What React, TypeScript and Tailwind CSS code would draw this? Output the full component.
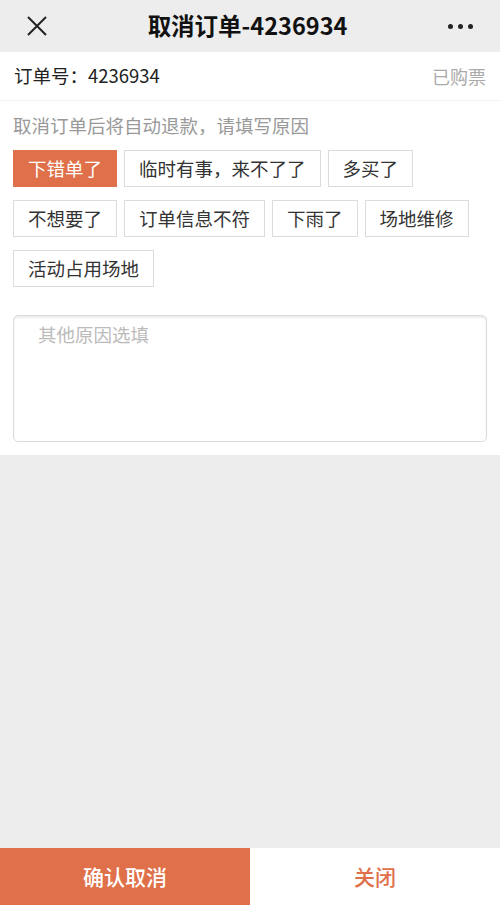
const reasons = [
  ["下错单了", "临时有事，来不了了", "多买了"],
  ["不想要了", "订单信息不符", "下雨了", "场地维修"],
  ["活动占用场地"],
];

export default function App() {
  const selected = "下错单了";
  const font = { fontFamily: '"Noto Sans CJK SC", "Noto Sans", sans-serif' };

  return (
    <div className="w-[500px] h-[905px] bg-[#ededed] flex flex-col" style={font}>
      {/* header */}
      <div className="h-[52px] flex items-center justify-between px-[27px] shrink-0">
        <svg width="20" height="20" viewBox="0 0 20 20" className="text-[#222]">
          <path d="M1 1 L19 19 M19 1 L1 19" stroke="currentColor" strokeWidth="2" />
        </svg>
        <div className="text-[23.5px] font-bold text-[#111] leading-none">取消订单-4236934</div>
        <div className="flex gap-[5px] items-center">
          <span className="w-[5px] h-[5px] rounded-full bg-[#222]" />
          <span className="w-[5px] h-[5px] rounded-full bg-[#222]" />
          <span className="w-[5px] h-[5px] rounded-full bg-[#222]" />
        </div>
      </div>

      <div className="bg-white">
        <div className="h-[49px] flex items-center justify-between px-[14px] border-b border-[#f2f2f2]">
          <span className="text-[18.5px] text-[#222]">订单号：4236934</span>
          <span className="text-[18px] text-[#aaa]">已购票</span>
        </div>

        <div className="px-[13px] pt-[12px] pb-[13px]">
          <div className="text-[18.5px] text-[#999] leading-[25px]">取消订单后将自动退款，请填写原因</div>

          <div className="mt-[12px] flex flex-col gap-[13px]">
            {reasons.map((row, i) => (
              <div key={i} className="flex gap-[7px]">
                {row.map((r) =>
                  r === selected ? (
                    <div key={r} className="h-[37px] px-[14px] flex items-center bg-[#e0704a] text-white text-[18.5px] border border-[#e0704a]">
                      {r}
                    </div>
                  ) : (
                    <div key={r} className="h-[37px] px-[14px] flex items-center bg-white text-[#333] text-[18.5px] border border-[#dcdcdc]">
                      {r}
                    </div>
                  )
                )}
              </div>
            ))}
          </div>

          <div className="mt-[28px] h-[127px] rounded-[5px] border border-[#dcdcdc] shadow-[inset_0_2px_2px_rgba(0,0,0,0.08)] px-[24px] py-[5px]">
            <div className="text-[18.5px] text-[#bbb]">其他原因选填</div>
          </div>
        </div>
      </div>

      <div className="flex-1" />

      <div className="h-[57px] flex shrink-0">
        <div className="w-[250px] bg-[#e0704a] text-white text-[21px] font-medium flex items-center justify-center">确认取消</div>
        <div className="flex-1 bg-white text-[#e0704a] text-[21px] font-medium flex items-center justify-center">关闭</div>
      </div>
    </div>
  );
}
